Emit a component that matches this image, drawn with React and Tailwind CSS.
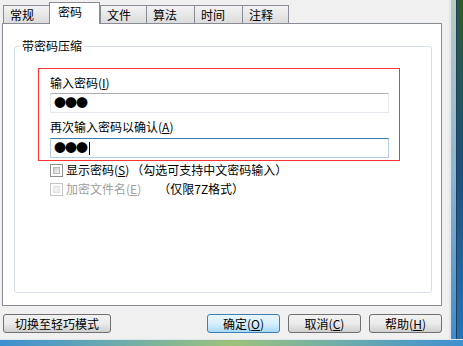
import React from "react";

const font = { fontFamily: '"Noto Sans CJK SC", "Liberation Sans", sans-serif' };

const Key = ({ k }) => (
  <span>
    (<span className="underline underline-offset-1">{k}</span>)
  </span>
);

const Dots = () => (
  <span className="text-[12px] leading-[18px] tracking-[-1px] text-black">●●●</span>
);

const Checkbox = ({ disabled }) => (
  <div
    className={`w-[13px] h-[13px] border p-[2px] bg-white ${
      disabled ? "border-[#c4c4c4]" : "border-[#8e8f8f]"
    }`}
  >
    <div
      className={`w-full h-full border ${
        disabled
          ? "border-[#e0e0e0] bg-[#f0f0f0]"
          : "border-[#b8b8b8] bg-gradient-to-br from-[#cbcbcb] to-[#f6f6f6]"
      }`}
    />
  </div>
);

const Button = ({ children, primary, w }) => (
  <button
    className={`${w} h-[19px] rounded-[3px] border text-[12px] leading-[17px] text-black ${
      primary
        ? "border-[#3c7fb1] bg-gradient-to-b from-[#eaf6fd] via-[#d7effc] to-[#a7d9f5]"
        : "border-[#707070] bg-gradient-to-b from-[#f2f2f2] via-[#ebebeb] to-[#cfcfcf]"
    }`}
  >
    {children}
  </button>
);

const Tab = ({ label, w, active }) =>
  active ? (
    <div
      className={`${w} h-[22px] -mb-px relative z-10 bg-white border-l border-t border-r border-[#898c95] text-[12px] leading-[16px] pl-[8px] pt-[1px]`}
    >
      {label}
    </div>
  ) : (
    <div
      className={`${w} h-[18px] border-l border-t border-r border-[#898c95] -mr-px bg-gradient-to-b from-[#f3f3f3] to-[#dcdcdc] text-[12px] leading-[16px] pl-[6px] pt-[1px]`}
    >
      {label}
    </div>
  );

export default function App() {
  return (
    <div className="w-[463px] h-[346px] flex flex-col overflow-hidden text-black" style={font}>
      <div className="flex h-[339px]">
        <div className="w-[449px] h-full bg-[#f0f0f0] flex flex-col">
          <div className="h-[23px] flex items-end pl-[3px]">
            <Tab label="常规" w="w-[47px]" />
            <Tab label="密码" w="w-[51px]" active />
            <Tab label="文件" w="w-[47px]" />
            <Tab label="算法" w="w-[49px]" />
            <Tab label="时间" w="w-[49px]" />
            <Tab label="注释" w="w-[47px]" />
          </div>
          <div className="ml-[2px] w-[440px] h-[283px] border border-[#898c95] bg-white pt-[22px] pl-[11px]">
            <div className="relative w-[418px] h-[247px] border border-[#d5dfe5] rounded-[3px]">
              <div className="absolute -top-[9px] left-[5px] bg-white px-[2px] text-[12px] leading-[16px]">
                带密码压缩
              </div>
              <div className="ml-[23px] mt-[21px] w-[362px] h-[93px] border border-[#ff3333] pt-[7px] pl-[11px] pr-[10px]">
                <div className="h-[14px] mb-[3px] text-[12px] leading-[14px]">
                  输入密码<Key k="I" />
                </div>
                <div className="h-[20px] border border-[#e3e9ef] border-t-[#abadb3] bg-white pl-[3px] flex items-center">
                  <Dots />
                </div>
                <div className="h-[14px] mt-[7px] mb-[4px] text-[12px] leading-[14px]">
                  再次输入密码以确认<Key k="A" />
                </div>
                <div className="h-[20px] border border-[#b5cfe7] border-t-[#3d7bad] bg-white pl-[3px] flex items-center">
                  <Dots />
                  <span className="w-px h-[13px] bg-black ml-[2px]" />
                </div>
              </div>
              <div className="ml-[35px] mt-[2px] flex items-center h-[14px] text-[12px] leading-[14px]">
                <Checkbox />
                <span className="ml-[3px]">
                  显示密码<Key k="S" />
                </span>
                <span className="ml-[2px]">（勾选可支持中文密码输入）</span>
              </div>
              <div className="ml-[35px] mt-[5px] flex items-center h-[14px] text-[12px] leading-[14px] text-[#a0a0a0]">
                <Checkbox disabled />
                <span className="ml-[3px]">
                  加密文件名<Key k="E" />
                </span>
                <span className="ml-[17px] text-black">（仅限7Z格式）</span>
              </div>
            </div>
          </div>
          <div className="mt-[8px] flex items-center pl-[3px]">
            <Button w="w-[108px]">切换至轻巧模式</Button>
            <div className="ml-auto mr-[7px] flex gap-[8px]">
              <Button w="w-[73px]" primary>
                确定<Key k="O" />
              </Button>
              <Button w="w-[73px]">
                取消<Key k="C" />
              </Button>
              <Button w="w-[73px]">
                帮助<Key k="H" />
              </Button>
            </div>
          </div>
        </div>
        <div className="flex-1 flex">
          <div className="w-[2px] bg-[#dfe6ed]" />
          <div className="w-[5px] bg-gradient-to-b from-[#b9cbbd] via-[#8fb6d0] to-[#3f8ccc]" />
          <div className="w-px bg-[#1d3d5e]" />
          <div className="flex-1 bg-gradient-to-b from-[#2f5a2e] via-[#1d4f7a] to-[#2673b4]" />
        </div>
      </div>
      <div className="h-[7px] flex flex-col">
        <div className="h-[1px] bg-[#dfe6ed]" />
        <div className="flex-1 bg-gradient-to-r from-[#3d8fd0] via-[#9cc27a] to-[#3d8fd0]" />
      </div>
    </div>
  );
}
